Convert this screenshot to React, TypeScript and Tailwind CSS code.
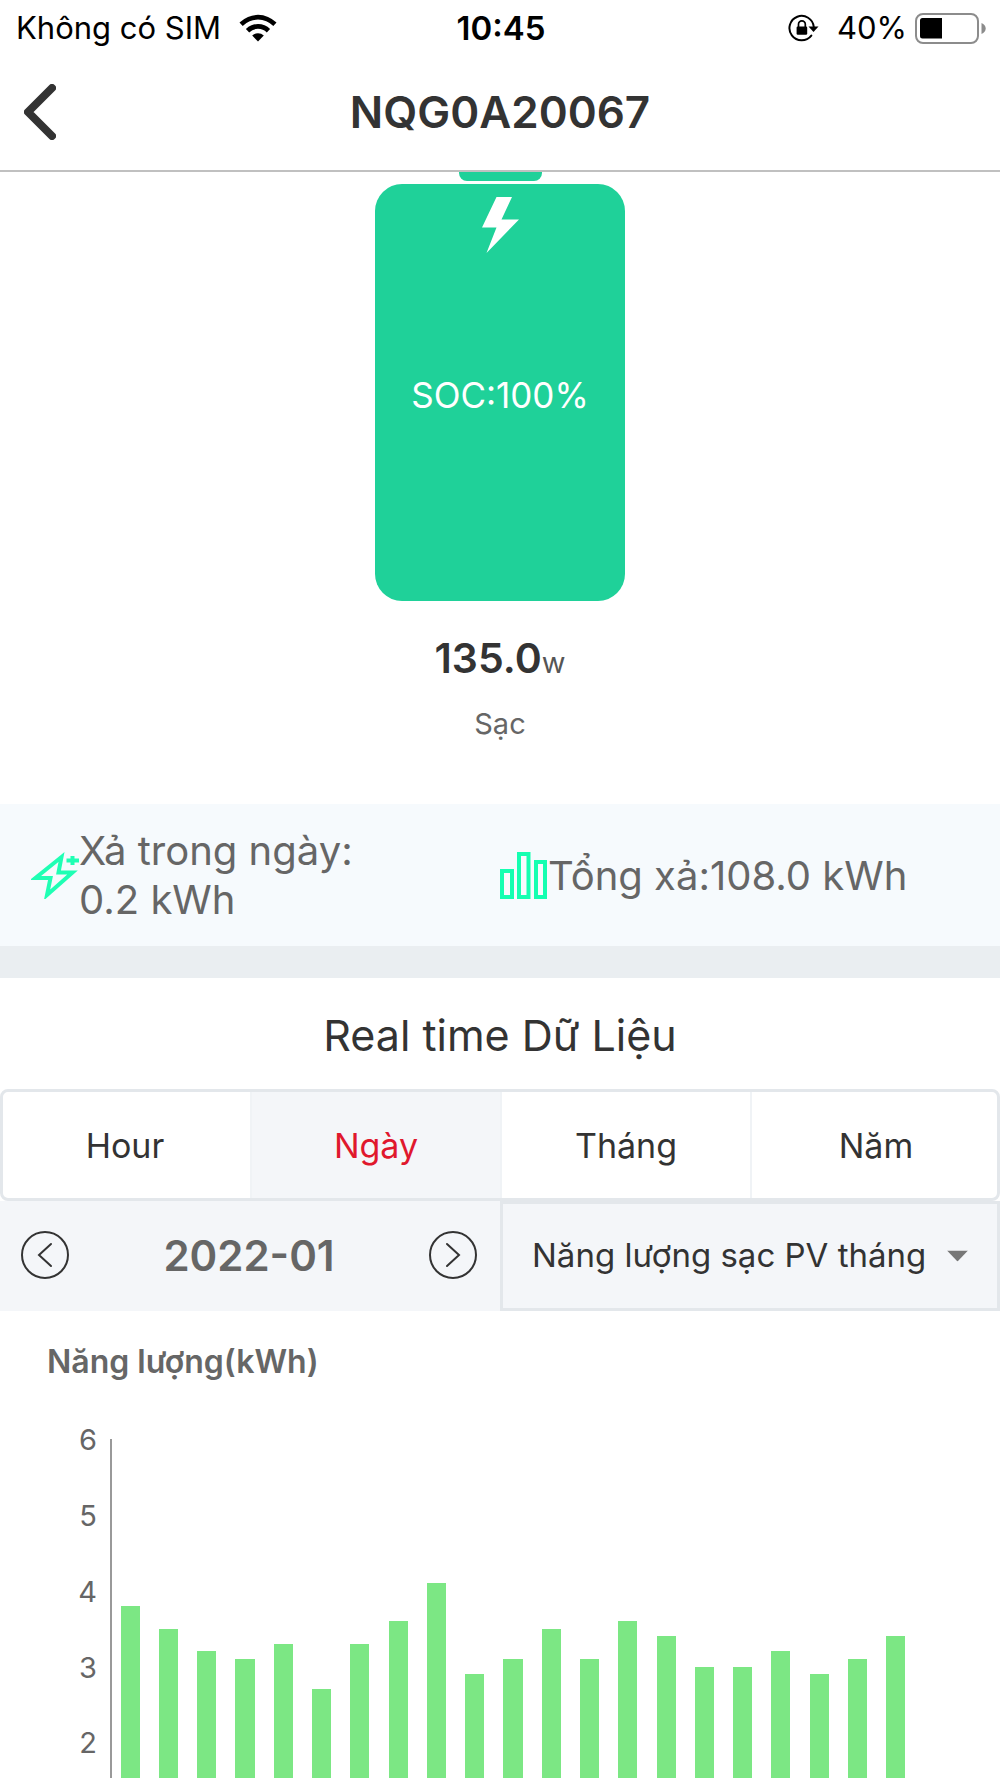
const soc = 100;

const tabs = ["Hour", "Ngày", "Tháng", "Năm"];

const axisMax = 6;
const axisLabels = [6, 5, 4, 3, 2];
const dailyEnergy = [
  3.8, 3.5, 3.2, 3.1, 3.3, 2.7, 3.3, 3.6, 4.1, 2.9, 3.1, 3.5, 3.1, 3.6, 3.4, 3.0, 3.0, 3.2, 2.9,
  3.1, 3.4,
];

function WifiIcon() {
  return (
    <svg width="38" height="28" viewBox="0 0 38 28" aria-hidden="true">
      <path d="M0.5 8.6A26 26 0 0 1 37.5 8.6L34.3 12A21.5 21.5 0 0 0 3.7 12Z" />
      <path d="M6.9 15A17 17 0 0 1 31.1 15L27.8 18.4A12.4 12.4 0 0 0 10.2 18.4Z" />
      <path d="M13.2 21.6A8.2 8.2 0 0 1 24.8 21.6L19 27.4Z" />
    </svg>
  );
}

function RotationLockIcon() {
  return (
    <svg width="31" height="28" viewBox="0 0 31 28" fill="none" aria-hidden="true">
      <path
        d="M23.3 21.6A12.2 12.2 0 1 1 25.8 13"
        stroke="#000"
        strokeWidth="2"
        strokeLinecap="round"
      />
      <path d="M20.5 12.6H30.5L25.5 18Z" fill="#000" />
      <rect x="8.6" y="12.5" width="10.6" height="8.3" rx="1.2" fill="#000" />
      <path d="M10.5 13V10.2a3.4 3.4 0 0 1 6.8 0V13" stroke="#000" strokeWidth="1.7" />
    </svg>
  );
}

function PhoneBatteryIcon() {
  return (
    <svg width="71" height="31" viewBox="0 0 71 31" fill="none" aria-hidden="true">
      <rect x="1" y="1" width="62" height="29" rx="7" stroke="#8c8c8c" strokeWidth="2" />
      <path d="M66.5 10c2.6 1 4.2 3 4.2 5.5s-1.6 4.5-4.2 5.5Z" fill="#8c8c8c" />
      <path d="M7.5 5H27V25.5H7.5A2.5 2.5 0 0 1 5 23V7.5A2.5 2.5 0 0 1 7.5 5Z" fill="#000" />
    </svg>
  );
}

function StatusBar() {
  return (
    <div className="grid h-14 shrink-0 grid-cols-[1fr_auto_1fr] items-center pr-[14px] pl-4 text-[31px] leading-[54px] text-black">
      <div className="flex items-center gap-[18px]">
        <span>Không có SIM</span>
        <WifiIcon />
      </div>
      <span className="text-[33px] font-semibold">10:45</span>
      <div className="flex items-center justify-end">
        <RotationLockIcon />
        <span className="mr-2 ml-[18px]">40%</span>
        <PhoneBatteryIcon />
      </div>
    </div>
  );
}

function Header() {
  return (
    <header className="grid h-[116px] shrink-0 grid-cols-[1fr_auto_1fr] items-center border-b-2 border-[#c0c0c0] px-6 pb-[3px]">
      <button type="button" aria-label="Back" className="w-8">
        <svg width="32" height="56" viewBox="0 0 32 56" fill="none" aria-hidden="true">
          <path
            d="M28 4 4 28l24 24"
            stroke="#333"
            strokeWidth="8"
            strokeLinecap="round"
            strokeLinejoin="round"
          />
        </svg>
      </button>
      <h1 className="text-[44px] font-semibold text-[#333]">NQG0A20067</h1>
    </header>
  );
}

function BatteryGauge() {
  return (
    <section className="flex h-[632px] shrink-0 flex-col items-center">
      <div className="h-[9px] w-[83px] rounded-b-lg bg-[#1fd199]" />
      <div className="mt-[3px] flex h-[417px] w-[250px] shrink-0 flex-col items-center rounded-[27px] bg-[#1fd199] pt-[13px]">
        <svg width="37" height="56" viewBox="0 0 37 56" fill="#fff" aria-hidden="true">
          <path d="M14.5 0H30L19.5 22.5H37L4.5 56 14.5 30.5H0Z" />
        </svg>
        <p className="mt-[117px] text-[35px] leading-[50px] text-white">SOC:{soc}%</p>
      </div>
      <p className="mt-8 flex items-baseline text-[41px] leading-[50px] font-semibold text-[#333]">
        135.0<span className="text-[29px] font-normal text-[#555]">w</span>
      </p>
      <p className="mt-4 text-[29px] leading-10 text-[#666]">Sạc</p>
    </section>
  );
}

function Totals() {
  return (
    <section className="grid h-[174px] shrink-0 grid-cols-2 border-b-32 border-[#eaeef1] bg-[#f6fafd] text-[40px] leading-[49px] text-[#666]">
      <div className="flex items-center pl-[31px]">
        <svg className="shrink-0" width="48" height="47" viewBox="0 0 48 47" fill="none" aria-hidden="true">
          <path
            d="M30.5 5 4.5 26H19.5L16 43 41.5 20.5H27.5Z"
            stroke="#1fffb4"
            strokeWidth="4"
          />
          <path d="M35.5 8.5H48M41.5 4V13" stroke="#1fffb4" strokeWidth="4" />
        </svg>
        <p>
          Xả trong ngày:
          <br />
          0.2 kWh
        </p>
      </div>
      <div className="flex items-center">
        <svg className="shrink-0" width="48" height="47" viewBox="0 0 48 47" fill="none" aria-hidden="true">
          <g stroke="#14ffb1" strokeWidth="4">
            <rect x="2" y="19" width="10" height="26" />
            <rect x="19" y="2" width="9.5" height="43" />
            <rect x="36" y="10" width="9" height="35" />
          </g>
        </svg>
        <p>Tổng xả:108.0 kWh</p>
      </div>
    </section>
  );
}

function PeriodTabs() {
  return (
    <div className="h-28 shrink-0 overflow-hidden rounded-lg border-3 border-[#e3e7eb] bg-white text-[34px] text-[#333]">
      <div role="tablist" className="-mx-[3px] grid h-full grid-cols-4">
        {tabs.map((tab) => (
          <button
            key={tab}
            type="button"
            role="tab"
            aria-selected={tab === "Ngày"}
            className="border-l-2 border-[#f0f3f6] first:border-l-0 aria-selected:bg-[#f4f6f9] aria-selected:text-[#e0182d]"
          >
            {tab}
          </button>
        ))}
      </div>
    </div>
  );
}

function StepButton({ label, d }: { label: string; d: string }) {
  return (
    <button type="button" aria-label={label}>
      <svg width="48" height="48" viewBox="0 0 48 48" fill="none" stroke="#333" strokeWidth="2" aria-hidden="true">
        <circle cx="24" cy="24" r="23" />
        <path d={d} strokeLinecap="round" />
      </svg>
    </button>
  );
}

function Controls() {
  return (
    <div className="grid h-[110px] shrink-0 grid-cols-2 bg-[#f4f6f9]">
      <div className="flex items-center justify-between pr-[23px] pb-[2px] pl-[21px]">
        <StepButton label="Previous month" d="M30 13 18 24l12 11" />
        <span className="text-[42px] font-semibold text-[#666]">2022-01</span>
        <StepButton label="Next month" d="M18 13 30 24 18 35" />
      </div>
      <div className="relative">
        <select
          aria-label="Data series"
          className="size-full appearance-none border-3 border-[#e3e7eb] bg-transparent pl-[29px] text-[33px] text-[#333]"
        >
          <option>Năng lượng sạc PV tháng</option>
        </select>
        <svg
          className="pointer-events-none absolute top-1/2 right-8 -translate-y-1/2"
          width="21"
          height="11"
          viewBox="0 0 21 11"
          aria-hidden="true"
        >
          <path d="M0 0H21L10.5 11Z" fill="#777" />
        </svg>
      </div>
    </div>
  );
}

function EnergyChart() {
  return (
    <section className="pt-[29px] pr-[85px] text-[#666]">
      <h3 className="pl-[47px] text-[32px] leading-[44px] font-semibold">Năng lượng(kWh)</h3>
      <div className="mt-[55px] flex h-[455px]">
        <div className="-mt-[17px] grid h-[455px] w-[97px] shrink-0 grid-rows-6 text-right text-[29px] leading-9">
          {axisLabels.map((n) => (
            <span key={n}>{n}</span>
          ))}
        </div>
        <div className="ml-[13px] w-0.5 shrink-0 bg-[#999]" />
        <div className="-ml-px flex flex-1 items-end">
          {dailyEnergy.map((value, day) => (
            <div key={day} className="flex h-full flex-1 items-end justify-center">
              <div
                className="w-1/2 bg-[#7ce784]"
                style={{ height: `${(value / axisMax) * 100}%` }}
              />
            </div>
          ))}
        </div>
      </div>
    </section>
  );
}

export default function App() {
  return (
    <div className="flex h-screen flex-col overflow-hidden bg-white font-['Inter',sans-serif]">
      <StatusBar />
      <Header />
      <main className="flex min-h-0 flex-1 flex-col overflow-hidden">
        <BatteryGauge />
        <Totals />
        <h2 className="flex h-[111px] shrink-0 items-center justify-center pt-1 text-[43px] text-[#333]">
          Real time Dữ Liệu
        </h2>
        <PeriodTabs />
        <Controls />
        <EnergyChart />
      </main>
    </div>
  );
}
